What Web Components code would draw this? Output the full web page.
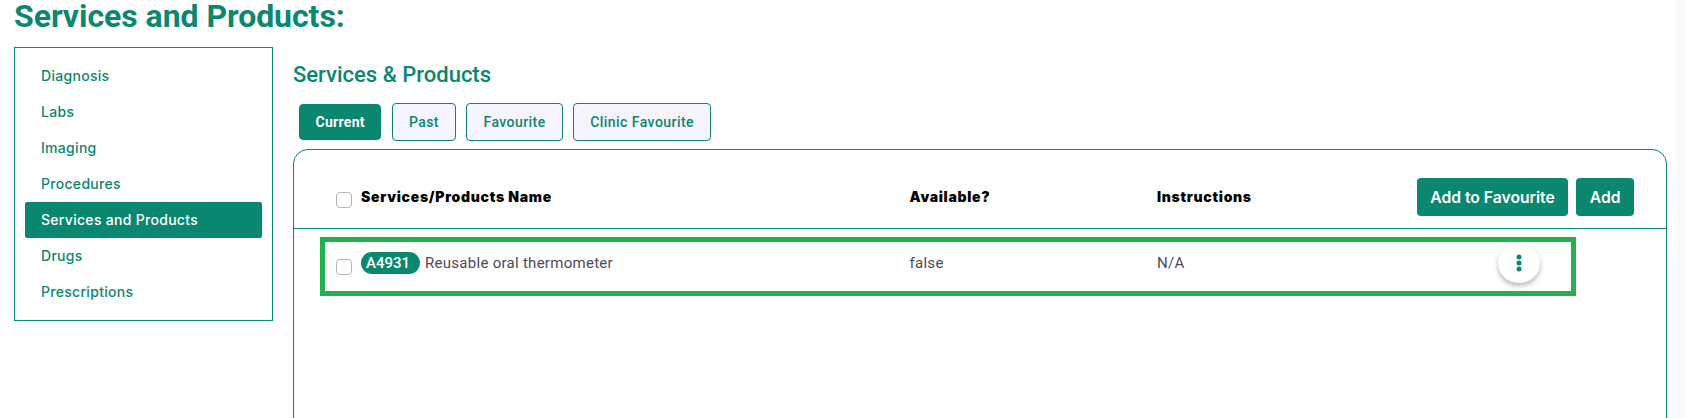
<!DOCTYPE html>
<html><head><meta charset="utf-8">
<style>
html,body{margin:0;padding:0;background:#fff;overflow:hidden;height:418px}
body{font-family:Roboto,sans-serif;color:#0a876f}
</style></head><body>
<template id="t-page"><style>
:host{display:flex;width:1686px;height:418px;overflow:hidden;box-sizing:border-box}
.main{width:1676px;box-sizing:border-box;padding-left:14px;flex:none}
.strip{flex:1;background:#fafafa}
h1{margin:0;font:700 32px/32px Roboto,sans-serif;color:#0a876f;height:47px;letter-spacing:-.05px}
.cols{display:flex;gap:20px;align-items:flex-start}
.right{flex:1;margin-right:9px;min-width:0;display:flex;flex-direction:column}
</style><div class="main"><h1>Services and Products:</h1><div class="cols"><slot name="nav"></slot><div class="right"><slot></slot></div></div></div><div class="strip"></div></template>

<template id="t-nav"><style>
:host{display:flex;flex-direction:column;width:259px;height:274px;box-sizing:border-box;border:1px solid #0a876f;padding:10px 10px;flex:none}
</style><slot></slot></template>

<template id="t-navitem"><style>
:host{display:flex;align-items:center;height:36px;padding:0 0 2px 16px;border-radius:2px;font:500 14px Inter,sans-serif;letter-spacing:.3px;color:#0a876f;box-sizing:border-box}
:host([active]){background:#0a876f;color:#fff}
</style><slot></slot></template>

<template id="t-tabs"><style>
:host{display:flex;gap:10.5px;align-items:center;margin:0 0 0 6px;height:40px}
</style><slot></slot></template>

<template id="t-tab"><style>
:host{display:flex;align-items:center;box-sizing:border-box;height:38px;padding:0 16px;border:1px solid #0a876f;border-radius:4px;background:#f6f4fe;color:#0a876f;font:500 14px Roboto,sans-serif;letter-spacing:.45px}
:host([active]){background:#0a876f;color:#fff;font-weight:700;height:36px;padding:0 15.5px;border-color:#0a876f;letter-spacing:.3px}
</style><slot></slot></template>

<template id="t-card"><style>
:host{display:block;box-sizing:border-box;border:1px solid #0a876f;border-radius:15px 15px 0 0;height:300px;margin-top:7px}
.head{display:grid;grid-template-columns:573.5px 247.5px 1fr auto;align-items:center;height:79px;padding:16px 32px 0 42px;border-bottom:1px solid #0a876f;box-sizing:border-box;font:900 14px Inter,sans-serif;letter-spacing:.7px;color:#000}
.first{display:flex;align-items:center;gap:9px}
.cb{display:flex;margin-top:6px}
.t{margin-bottom:2px}
.acts{display:flex;gap:8px;justify-content:flex-end}
</style><div class="head"><div class="first"><span class="cb"><slot name="check"></slot></span><span class="t">Services/Products Name</span></div><div class="t">Available?</div><div class="t">Instructions</div><div class="acts"><slot name="actions"></slot></div></div><slot></slot></template>

<template id="t-check"><style>
:host{display:inline-block;width:16px;height:16px;box-sizing:border-box;border:1px solid #b5b5b5;border-radius:4px;background:#fff;flex:none}
</style></template>

<template id="t-btn"><style>
:host{display:flex;align-items:center;height:38px;box-sizing:border-box;padding:0 13.5px;background:#0a876f;color:#fff;border-radius:4px;font:600 15.7px Inter,sans-serif;letter-spacing:0}
</style><slot></slot></template>

<template id="t-row"><style>
:host{display:grid;grid-template-columns:573.5px 247.5px 1fr 42px;align-items:center;box-sizing:border-box;width:1256px;height:59px;margin:8px 0 0 26px;border:5px solid #22b14c;padding:0 31px 0 11px;font:400 15px Roboto,sans-serif;letter-spacing:.28px;color:#4b4b57}
.first{display:flex;align-items:center;gap:9px}
.pill{display:inline-flex;align-items:center;box-sizing:border-box;padding-left:5px;width:59px;height:22px;border-radius:11px;background:#0a876f;color:#fff;font:500 15px Roboto,sans-serif;letter-spacing:0;margin-bottom:7px}
.name{margin-left:-4px}
.v{margin-bottom:7px}
.kebab{width:42px;height:39px;border-radius:50%;background:#fff;box-shadow:0 3px 5px rgba(0,0,0,.28);display:flex;align-items:center;justify-content:center;margin-bottom:7px}
</style><div class="first"><slot name="check"></slot><span class="pill">A4931</span><span class="name v">Reusable oral thermometer</span></div><div class="v">false</div><div class="v">N/A</div><div class="kebab"><svg width="6" height="18" viewBox="0 0 6 18"><circle cx="3" cy="3" r="2.5" fill="#0a876f"/><circle cx="3" cy="9" r="2.5" fill="#0a876f"/><circle cx="3" cy="15" r="2.5" fill="#0a876f"/></svg></div></template>

<template id="t-title"><style>
:host{display:flex;align-items:center;height:55px;font:500 22px Roboto,sans-serif;color:#0a876f}
</style><slot></slot></template>

<sp-page>
<sp-nav slot="nav">
<sp-navitem>Diagnosis</sp-navitem><sp-navitem>Labs</sp-navitem><sp-navitem>Imaging</sp-navitem><sp-navitem>Procedures</sp-navitem><sp-navitem active>Services and Products</sp-navitem><sp-navitem>Drugs</sp-navitem><sp-navitem>Prescriptions</sp-navitem>
</sp-nav>
<sp-title>Services &amp; Products</sp-title>
<sp-tabs><sp-tab active>Current</sp-tab><sp-tab>Past</sp-tab><sp-tab>Favourite</sp-tab><sp-tab>Clinic Favourite</sp-tab></sp-tabs>
<sp-card><sp-check slot="check"></sp-check><sp-btn slot="actions">Add to Favourite</sp-btn><sp-btn slot="actions">Add</sp-btn>
<sp-row><sp-check slot="check"></sp-check></sp-row></sp-card>
</sp-page>
<script>
for(const [tag,id] of [['sp-page','t-page'],['sp-nav','t-nav'],['sp-navitem','t-navitem'],['sp-tabs','t-tabs'],['sp-tab','t-tab'],['sp-card','t-card'],['sp-check','t-check'],['sp-btn','t-btn'],['sp-row','t-row'],['sp-title','t-title']]){
customElements.define(tag,class extends HTMLElement{constructor(){super();this.attachShadow({mode:'open'}).appendChild(document.getElementById(id).content.cloneNode(true))}})
}
</script>
</body></html>
